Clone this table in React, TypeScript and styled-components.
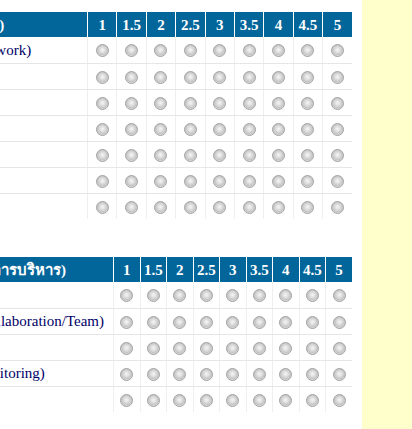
import styled, { createGlobalStyle } from "styled-components";

//************************************************************

// the page in the shot is scrolled sideways, this much of the table is off to the left
const OFFSET = 147;

const GlobalStyle = createGlobalStyle`
  html, body {
    margin: 0;
    padding: 0;
    background: #ffffcc;
  }
  body {
    font-family: "Liberation Serif", "Times New Roman", serif;
  }
`;

const Page = styled.div`
  display: flex;
  flex-direction: row;
  min-height: 100vh;
`;

const Main = styled.div`
  width: 362px;
  flex: none;
  background: #fff;
  overflow: hidden;
  padding-top: 12px;
`;

const Side = styled.div`
  flex: 1;
  background: #ffffcc;
`;

const Table = styled.table<{ $gap?: number }>`
  border-collapse: collapse;
  table-layout: fixed;
  width: ${352 + OFFSET}px;
  margin-left: -${OFFSET}px;
  margin-top: ${(p) => p.$gap || 0}px;
  font-size: 15px;
`;

const HeadRow = styled.tr`
  height: 25px;
  background: #03669b;
`;

const HeadCell = styled.th<{ $left?: boolean }>`
  color: #fff;
  font-weight: bold;
  padding: 0 ${(p) => (p.$left ? "4px" : "0")};
  text-align: ${(p) => (p.$left ? "left" : "center")};
  border-left: 1px solid #fff;
  white-space: nowrap;
  overflow: hidden;
  line-height: 24px;
`;

const Row = styled.tr`
  height: 26px;
  & > td {
    border-bottom: 1px solid #e6e6e6;
  }
  &:last-child > td {
    border-bottom: none;
  }
`;

const Label = styled.td`
  color: #000066;
  padding: 0 4px;
  white-space: nowrap;
  overflow: hidden;
`;

const RadioCell = styled.td`
  text-align: center;
  border-left: 1px solid #efefef;
  padding: 0;
`;

const Radio = styled.input.attrs({ type: "radio" })`
  appearance: none;
  -webkit-appearance: none;
  display: inline-block;
  box-sizing: border-box;
  width: 13px;
  height: 13px;
  margin: 0;
  vertical-align: middle;
  border-radius: 50%;
  border: 1px solid #a3a3a3;
  background: radial-gradient(
    circle at 50% 45%,
    #f6f6f6 0,
    #dcdcdc 35%,
    #c4c4c4 60%,
    #ededed 80%,
    #ffffff 100%
  );
`;

const SCORES = ["1", "1.5", "2", "2.5", "3", "3.5", "4", "4.5", "5"];

const ScoreTable = ({
  title,
  items,
  labelWidth,
  name,
  gap,
}: {
  title: string;
  items: string[];
  labelWidth: number;
  name: string;
  gap?: number;
}) => {
  return (
    <Table $gap={gap}>
      <colgroup>
        <col style={{ width: labelWidth + OFFSET }} />
        {SCORES.map((s) => (
          <col key={s} />
        ))}
      </colgroup>
      <thead>
        <HeadRow>
          <HeadCell $left>{title}</HeadCell>
          {SCORES.map((s) => (
            <HeadCell key={s}>{s}</HeadCell>
          ))}
        </HeadRow>
      </thead>
      <tbody>
        {items.map((item, i) => (
          <Row key={i}>
            <Label>{item}</Label>
            {SCORES.map((s) => (
              <RadioCell key={s}>
                <Radio name={name + i} value={s} />
              </RadioCell>
            ))}
          </Row>
        ))}
      </tbody>
    </Table>
  );
};

const core = [
  "การทำงานกลุ่ม (Teamwork)",
  "การมุ่งผลสัมฤทธิ์",
  "การบริการที่ดี",
  "จริยธรรม",
  "การพัฒนาตนเอง",
  "ความรับผิดชอบ",
  "ความคิดริเริ่ม",
];

const manage = [
  "วิสัยทัศน์",
  "การทำงานร่วมกัน (Collaboration/Team)",
  "การวางแผนงาน",
  "การกำกับติดตาม(Monitoring)",
  "การตัดสินใจ",
];

export default function App() {
  return (
    <>
      <GlobalStyle />
      <Page>
        <Main>
          <ScoreTable
            title="1 สมรรถนะหลัก (Core)"
            items={core}
            labelWidth={87}
            name="core"
          />
          <ScoreTable
            title="ส่วนที่ 2.1 สมรรถนะ (การบริหาร)"
            items={manage}
            labelWidth={113}
            name="manage"
            gap={38}
          />
        </Main>
        <Side />
      </Page>
    </>
  );
}
